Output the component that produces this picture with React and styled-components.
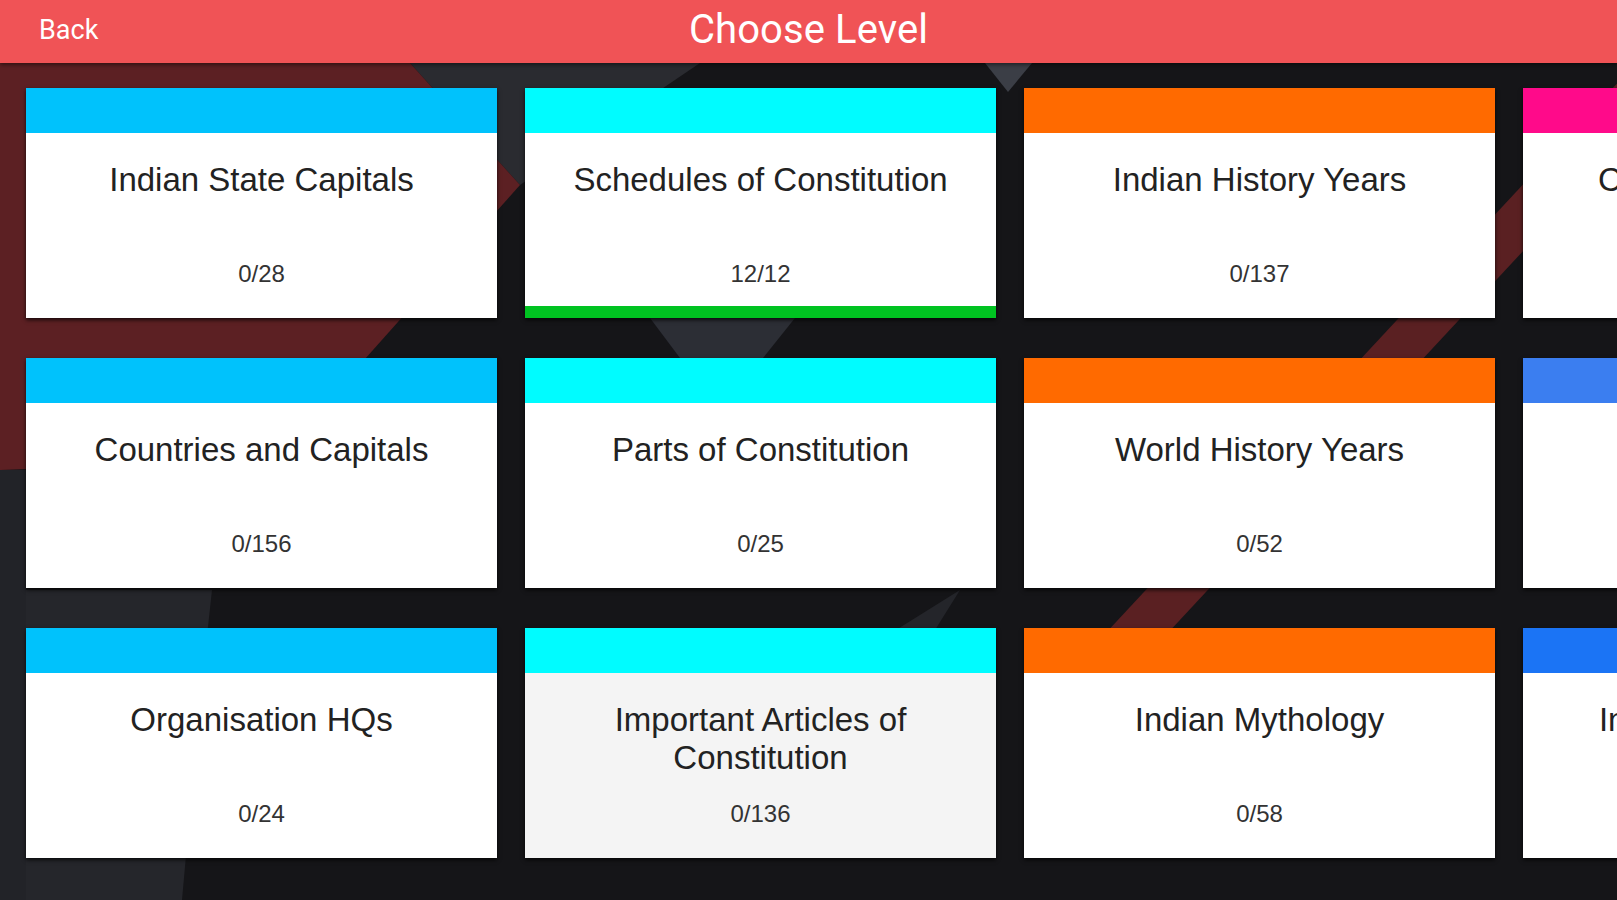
import React from 'react';
import styled, { createGlobalStyle } from 'styled-components';

const levels = [
  { title: 'Indian State Capitals', done: 0, total: 28, color: '#00c2fc' },
  { title: 'Countries and Capitals', done: 0, total: 156, color: '#00c2fc' },
  { title: 'Organisation HQs', done: 0, total: 24, color: '#00c2fc' },
  { title: 'Schedules of Constitution', done: 12, total: 12, color: '#00fcff' },
  { title: 'Parts of Constitution', done: 0, total: 25, color: '#00fcff' },
  { title: 'Important Articles of Constitution', done: 0, total: 136, color: '#00fcff', pressed: true },
  { title: 'Indian History Years', done: 0, total: 137, color: '#ff6a00' },
  { title: 'World History Years', done: 0, total: 52, color: '#ff6a00' },
  { title: 'Indian Mythology', done: 0, total: 58, color: '#ff6a00' },
  { title: 'Currency of Countries', done: 0, total: 40, color: '#ff0a8a' },
  { title: 'Sports and Games', done: 0, total: 45, color: '#3b7ef0' },
  { title: 'Indian Art and Culture', done: 0, total: 60, color: '#1b74f5' },
];

const GlobalStyle = createGlobalStyle`
  html, body {
    margin: 0;
    padding: 0;
    background: #151518;
    overflow: hidden;
  }
  * { box-sizing: border-box; }
`;

const Screen = styled.div`
  width: 100vw;
  height: 100vh;
  display: flex;
  flex-direction: column;
  background: #151518;
  overflow: hidden;
`;

const TopBar = styled.header`
  position: relative;
  z-index: 2;
  height: 63px;
  flex-shrink: 0;
  display: grid;
  grid-template-columns: 1fr auto 1fr;
  align-items: center;
  padding-bottom: 4px;
  background: #f05356;
  box-shadow: 0 2px 4px rgba(0, 0, 0, 0.45);
  font-family: Roboto, 'Liberation Sans', sans-serif;
  color: #fff;
`;

const BackButton = styled.span`
  justify-self: start;
  padding-left: 39px;
  font-size: 27px;
  cursor: pointer;
`;

const Title = styled.h1`
  margin: 0;
  font-size: 40px;
  font-weight: 400;
  letter-spacing: 0.1px;
`;

const Board = styled.main`
  position: relative;
  flex: 1;
  overflow: hidden;
`;

const Backdrop = styled.svg`
  position: absolute;
  inset: 0;
  width: 100%;
  height: 100%;
  pointer-events: none;
`;

const LevelGrid = styled.div`
  position: relative;
  display: grid;
  grid-auto-flow: column;
  grid-template-rows: repeat(3, 230px);
  grid-auto-columns: 471px;
  column-gap: 28px;
  row-gap: 40px;
  padding: 25px 0 0 26px;
  width: max-content;
`;

const Card = styled.div`
  display: flex;
  flex-direction: column;
  background: ${(p) => (p.$pressed ? '#f4f4f4' : '#ffffff')};
  box-shadow: 0 2px 4px rgba(0, 0, 0, 0.75);
  font-family: 'Liberation Sans', Arial, sans-serif;
  cursor: pointer;
`;

const Strip = styled.div`
  height: 45px;
  flex-shrink: 0;
  background: ${(p) => p.$color};
`;

const CardBody = styled.div`
  flex: 1;
  display: flex;
  flex-direction: column;
  justify-content: space-between;
  align-items: center;
  padding: 28px 16px 18px;
  text-align: center;
`;

const LevelName = styled.div`
  font-size: 33px;
  line-height: 38px;
  color: #222;
`;

const Count = styled.div`
  font-size: 24px;
  line-height: 28px;
  color: #333;
`;

const DoneBar = styled.div`
  height: 12px;
  flex-shrink: 0;
  background: ${(p) => (p.$complete ? '#00c321' : 'transparent')};
`;

const Background = () => (
  <Backdrop viewBox="0 63 1617 837" preserveAspectRatio="none">
    <rect x="0" y="63" width="1617" height="837" fill="#151518" />
    <polygon points="0,590 212,590 200,700 182,900 0,900" fill="#25262b" />
    <polygon points="0,470 26,470 26,900 0,900" fill="#222328" />
    <polygon points="410,63 700,63 520,185" fill="#2a2b30" />
    <polygon points="0,63 410,63 520,185 275,460 0,470" fill="#5c2023" />
    <polygon points="985,63 1032,63 1008,92" fill="#3b3e46" />
    <polygon points="650,318 795,318 763,358 680,358" fill="#2c2e35" />
    <polygon points="880,640 960,590 935,630 900,660" fill="#24252a" />
    <polygon points="1636,63 1698,63 1152,650 1090,650" fill="#5a2022" />
  </Backdrop>
);

const App = () => {
  return (
    <Screen>
      <GlobalStyle />
      <TopBar>
        <BackButton>Back</BackButton>
        <Title>Choose Level</Title>
        <span />
      </TopBar>
      <Board>
        <Background />
        <LevelGrid>
          {levels.map((level) => (
            <Card key={level.title} $pressed={level.pressed}>
              <Strip $color={level.color} />
              <CardBody>
                <LevelName>{level.title}</LevelName>
                <Count>{`${level.done}/${level.total}`}</Count>
              </CardBody>
              <DoneBar $complete={level.done === level.total} />
            </Card>
          ))}
        </LevelGrid>
      </Board>
    </Screen>
  );
};

export default App;
